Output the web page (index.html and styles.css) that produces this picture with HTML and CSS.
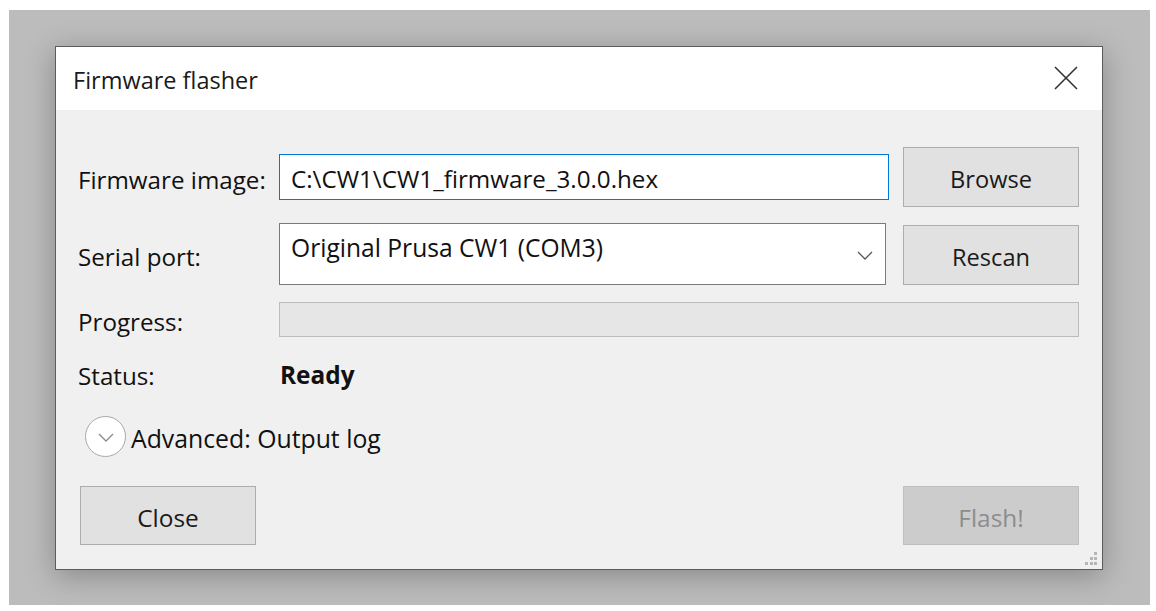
FILE: index.html
```html
<!DOCTYPE html>
<html>
<head>
<meta charset="utf-8">
<link rel="stylesheet" href="styles.css">
</head>
<body>
<div class="backdrop">
  <div class="dialog">
    <div class="titlebar">
      <span class="title">Firmware flasher</span>
      <svg class="close" width="24" height="24" viewBox="0 0 24 24"><path d="M1 1 L23 23 M23 1 L1 23" stroke="#333" stroke-width="1.6" fill="none"/></svg>
    </div>
    <div class="content">
      <div class="row row1">
        <span class="label">Firmware image:</span>
        <div class="input">C:\CW1\CW1_firmware_3.0.0.hex</div>
        <div class="btn">Browse</div>
      </div>
      <div class="row row2">
        <span class="label">Serial port:</span>
        <div class="select"><span>Original Prusa CW1 (COM3)</span>
          <svg class="chev" width="16" height="9" viewBox="0 0 16 9"><path d="M1 1 L8 8 L15 1" stroke="#555" stroke-width="1.3" fill="none"/></svg>
        </div>
        <div class="btn rescan">Rescan</div>
      </div>
      <div class="row row3">
        <span class="label">Progress:</span>
        <div class="progress"></div>
      </div>
      <div class="row row4">
        <span class="label">Status:</span>
        <span class="status">Ready</span>
      </div>
      <div class="advanced">
        <span class="circle"><svg width="16" height="9" viewBox="0 0 16 9"><path d="M1 1 L8 8 L15 1" stroke="#8a8a8a" stroke-width="1.3" fill="none"/></svg></span>
        <span class="advtext">Advanced: Output log</span>
      </div>
      <div class="actions">
        <div class="btn close-btn">Close</div>
        <div class="btn disabled">Flash!</div>
      </div>
      <svg class="grip" width="16" height="16" viewBox="0 0 16 16">
        <rect x="12" y="1" width="3" height="3" fill="#b5b5b5"/>
        <rect x="8" y="6" width="3" height="3" fill="#b5b5b5"/>
        <rect x="12" y="6" width="3" height="3" fill="#b5b5b5"/>
        <rect x="3" y="11" width="3" height="3" fill="#b5b5b5"/>
        <rect x="8" y="11" width="3" height="3" fill="#b5b5b5"/>
        <rect x="12" y="11" width="3" height="3" fill="#b5b5b5"/>
      </svg>
    </div>
  </div>
</div>
</body>
</html>
```
FILE: styles.css
```css
* { box-sizing: border-box; }
html, body { margin: 0; padding: 0; background: #ffffff; }
body {
  width: 1156px;
  height: 611px;
  overflow: hidden;
  font-family: "Open Sans", "Noto Sans", sans-serif;
  color: #111;
}
.backdrop {
  margin: 10px 0 0 9px;
  width: 1141px;
  height: 595px;
  background: #bcbcbc;
  padding: 36px 0 0 46px;
}
.dialog {
  width: 1048px;
  height: 524px;
  border: 1px solid #5c5c5c;
  background: #f0f0f0;
  box-shadow: 0 6px 28px rgba(0,0,0,0.28);
  display: flex;
  flex-direction: column;
}
.titlebar {
  height: 63px;
  background: #ffffff;
  display: flex;
  align-items: center;
  justify-content: space-between;
  padding: 0 24px 0 17px;
}
.title {
  font-size: 23.5px;
  color: #1a1a1a;
  margin-top: 3px;
}
.close { margin-top: -2px; }
.content {
  flex: 1;
  position: relative;
  padding: 37px 23px 0 22px;
  display: flex;
  flex-direction: column;
}
.row {
  display: grid;
  grid-template-columns: 187px 610px 176px;
  column-gap: 14px;
  align-items: center;
}
.label {
  font-size: 24.2px;
  color: #111;
  white-space: nowrap;
  padding-top: 4px;
}
.row1 { height: 60px; }
.input {
  height: 46px;
  background: #fff;
  border: 1px solid #0078d7;
  font-size: 24.2px;
  padding: 3px 0 0 11px;
  display: flex;
  align-items: center;
  color: #111;
}
.btn {
  height: 60px;
  background: #e1e1e1;
  border: 1px solid #adadad;
  font-size: 23.6px;
  display: flex;
  align-items: center;
  justify-content: center;
  color: #1a1a1a;
  padding-top: 4px;
}
.row2 { height: 62px; margin-top: 16px; }
.select {
  height: 62px;
  width: 607px;
  background: #fff;
  border: 1px solid #7a7a7a;
  font-size: 24.6px;
  padding: 7px 12px 0 11px;
  position: relative;
  color: #111;
}
.chev { position: absolute; right: 12px; top: 27px; }
.rescan { align-self: end; }
.row3 { height: 35px; margin-top: 16px; }
.progress {
  grid-column: 2 / 4;
  height: 35px;
  background: #e6e6e6;
  border: 1px solid #bcbcbc;
}
.row4 { height: 40px; margin-top: 17px; }
.status { font-weight: 700; font-size: 24.4px; color: #111; margin-left: 1px; padding-top: 2px; }
.advanced {
  margin-top: 22px;
  margin-left: 7px;
  height: 42px;
  display: flex;
  align-items: center;
}
.circle {
  width: 41px;
  height: 41px;
  border-radius: 50%;
  border: 1px solid #a8a8a8;
  background: #fff;
  display: flex;
  align-items: center;
  justify-content: center;
  padding-top: 2px;
}
.advtext { font-size: 24.8px; margin-left: 5px; color: #111; padding-top: 3px; }
.actions {
  margin-top: 29px;
  margin-left: 2px;
  display: flex;
  justify-content: space-between;
}
.actions .btn { width: 176px; height: 59px; font-size: 24.4px; }
.btn.disabled {
  background: #cccccc;
  border-color: #bfbfbf;
  color: #8c8c8c;
}
.grip { position: absolute; right: 4px; bottom: 2px; }
```
